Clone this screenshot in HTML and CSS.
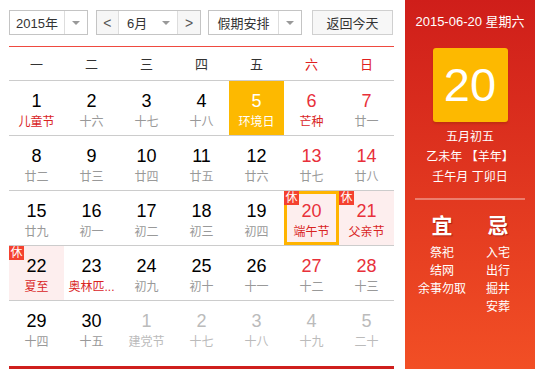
FILE: index.html
```html
<!DOCTYPE html>
<html lang="zh-CN">
<head>
  <meta charset="UTF-8">
  <title>万年历</title>
  <link rel="stylesheet" href="styles.css">
</head>
<body>

  <div class="calendar">
    <div class="cal-main">

      <div class="toolbar">
        <div class="select year-select">
          <span class="select-text">2015年</span>
          <span class="select-arrow"></span>
        </div>
        <div class="select month-select">
          <span class="nav-btn">&lt;</span>
          <span class="select-text">6月</span>
          <span class="select-arrow"></span>
          <span class="nav-btn">&gt;</span>
        </div>
        <div class="select holiday-select">
          <span class="select-text">假期安排</span>
          <span class="select-arrow"></span>
        </div>
        <button class="today-btn">返回今天</button>
      </div>

      <div class="week-head">
        <span>一</span><span>二</span><span>三</span><span>四</span><span>五</span>
        <span class="weekend">六</span><span class="weekend">日</span>
      </div>

      <div class="days">
        <div class="day"><b>1</b><i class="fest">儿童节</i></div>
        <div class="day"><b>2</b><i>十六</i></div>
        <div class="day"><b>3</b><i>十七</i></div>
        <div class="day"><b>4</b><i>十八</i></div>
        <div class="day today"><b>5</b><i>环境日</i></div>
        <div class="day weekend"><b>6</b><i class="fest">芒种</i></div>
        <div class="day weekend"><b>7</b><i>廿一</i></div>

        <div class="day"><b>8</b><i>廿二</i></div>
        <div class="day"><b>9</b><i>廿三</i></div>
        <div class="day"><b>10</b><i>廿四</i></div>
        <div class="day"><b>11</b><i>廿五</i></div>
        <div class="day"><b>12</b><i>廿六</i></div>
        <div class="day weekend"><b>13</b><i>廿七</i></div>
        <div class="day weekend"><b>14</b><i>廿八</i></div>

        <div class="day"><b>15</b><i>廿九</i></div>
        <div class="day"><b>16</b><i>初一</i></div>
        <div class="day"><b>17</b><i>初二</i></div>
        <div class="day"><b>18</b><i>初三</i></div>
        <div class="day"><b>19</b><i>初四</i></div>
        <div class="day weekend rest selected"><span class="rest-tag">休</span><b>20</b><i class="fest">端午节</i></div>
        <div class="day weekend rest"><span class="rest-tag">休</span><b>21</b><i class="fest">父亲节</i></div>

        <div class="day rest"><span class="rest-tag">休</span><b>22</b><i class="fest">夏至</i></div>
        <div class="day"><b>23</b><i class="fest">奥林匹...</i></div>
        <div class="day"><b>24</b><i>初九</i></div>
        <div class="day"><b>25</b><i>初十</i></div>
        <div class="day"><b>26</b><i>十一</i></div>
        <div class="day weekend"><b>27</b><i>十二</i></div>
        <div class="day weekend"><b>28</b><i>十三</i></div>

        <div class="day"><b>29</b><i>十四</i></div>
        <div class="day"><b>30</b><i>十五</i></div>
        <div class="day other"><b>1</b><i>建党节</i></div>
        <div class="day other"><b>2</b><i>十七</i></div>
        <div class="day other"><b>3</b><i>十八</i></div>
        <div class="day other"><b>4</b><i>十九</i></div>
        <div class="day other"><b>5</b><i>二十</i></div>
      </div>

    </div>

    <div class="cal-side">
      <div class="side-date">2015-06-20 星期六</div>
      <div class="side-day">20</div>
      <div class="side-lunar">
        <p>五月初五</p>
        <p>乙未年 【羊年】</p>
        <p>壬午月 丁卯日</p>
      </div>
      <div class="side-line"></div>
      <div class="almanac">
        <div class="almanac-col">
          <h3>宜</h3>
          <p>祭祀</p>
          <p>结网</p>
          <p>余事勿取</p>
        </div>
        <div class="almanac-col">
          <h3>忌</h3>
          <p>入宅</p>
          <p>出行</p>
          <p>掘井</p>
          <p>安葬</p>
        </div>
      </div>
    </div>
  </div>

</body>
</html>
```

FILE: styles.css
```css
* {
  margin: 0;
  padding: 0;
  box-sizing: border-box;
  font-family: 'Liberation Sans', 'Noto Sans CJK SC', sans-serif;
}

body {
  background-color: #fff;
  color: #333;
}

.calendar {
  display: flex;
  height: 369px;
  padding-left: 9px;
}

/* Left part: toolbar + month grid */
.cal-main {
  width: 385px;
  margin-right: 11px;
  padding-top: 10px;
  border-bottom: 3px solid #cf1f1c;
}

.toolbar {
  display: flex;
  height: 25px;
  margin-bottom: 11px;
}

.select {
  display: flex;
  align-items: stretch;
  height: 25px;
  border: 1px solid #c4c4c4;
  font-size: 13px;
  color: #333;
  background-color: #fff;
}

.select-text {
  display: flex;
  align-items: center;
  justify-content: center;
}

.select-arrow {
  display: flex;
  align-items: center;
  justify-content: center;
  width: 23px;
  border-left: 1px solid #ddd;
}

.select-arrow::after {
  content: '';
  border-left: 4px solid transparent;
  border-right: 4px solid transparent;
  border-top: 4px solid #999;
}

.year-select {
  width: 79px;
  margin-right: 8px;
}

.year-select .select-text {
  width: 54px;
}

.month-select {
  width: 105px;
  margin-right: 7px;
}

.month-select .select-text {
  width: 37px;
}

.month-select .select-arrow {
  border-left: none;
  border-right: 1px solid #ddd;
  width: 23px;
}

.nav-btn {
  display: flex;
  align-items: center;
  justify-content: center;
  width: 22px;
  background-color: #f6f6f6;
  color: #555;
  font-size: 14px;
}

.month-select .nav-btn:first-child {
  border-right: 1px solid #ddd;
}

.holiday-select {
  width: 94px;
  margin-right: 10px;
}

.holiday-select .select-text {
  width: 70px;
}

.today-btn {
  width: 81px;
  height: 25px;
  border: 1px solid #d0d0d0;
  background-color: #f7f7f7;
  color: #333;
  font-size: 13px;
}

.week-head {
  display: grid;
  grid-template-columns: repeat(7, 55px);
  height: 35px;
  border-top: 1px solid #ef4a40;
  border-bottom: 1px solid #ccc;
}

.week-head span {
  display: flex;
  align-items: center;
  justify-content: center;
  font-size: 13px;
  color: #333;
}

.week-head .weekend {
  color: #e02020;
}

.days {
  display: grid;
  grid-template-columns: repeat(7, 55px);
}

.day {
  position: relative;
  height: 55px;
  border-bottom: 1px solid #ccc;
  display: flex;
  flex-direction: column;
  align-items: center;
  padding-top: 9px;
}

.day:nth-child(n+29) {
  border-bottom: none;
}

.day b {
  font-weight: normal;
  font-size: 18px;
  line-height: 22px;
  color: #000;
}

.day i {
  font-style: normal;
  font-size: 12px;
  line-height: 20px;
  color: #999;
  white-space: nowrap;
}

.day i.fest {
  color: #d9251f;
}

.day.weekend b {
  color: #e8303a;
}

.day.today {
  background-color: #fdb900;
}

.day.today b,
.day.today i {
  color: #fff;
}

.day.rest {
  background-color: #fdeeee;
}

.day.selected {
  box-shadow: inset 0 0 0 3px #ffb400;
}

.rest-tag {
  position: absolute;
  top: 0;
  left: 0;
  width: 15px;
  height: 14px;
  background-color: #f4412f;
  color: #fff;
  font-size: 12px;
  line-height: 14px;
  text-align: center;
}

.day.other b,
.day.other i {
  color: #bbb;
}

/* Right part: selected day details */
.cal-side {
  width: 130px;
  background: linear-gradient(to bottom, #cf1e1a, #f24f25);
  color: #fff;
  text-align: center;
  padding-top: 14px;
}

.side-date {
  font-size: 13px;
  line-height: 16px;
}

.side-day {
  width: 75px;
  height: 74px;
  margin: 18px auto 0;
  background-color: #fdb900;
  border-radius: 3px;
  box-shadow: 0 2px 2px rgba(150, 40, 0, 0.35);
  font-size: 47px;
  line-height: 74px;
}

.side-lunar {
  margin-top: 5px;
  font-size: 12px;
  line-height: 20px;
}

.side-line {
  width: 110px;
  height: 2px;
  margin: 11px auto 0;
  background-color: rgba(255, 255, 255, 0.35);
}

.almanac {
  display: grid;
  grid-template-columns: 56px 56px;
  justify-content: center;
  margin-top: 14px;
}

.almanac h3 {
  font-size: 21px;
  line-height: 24px;
  font-weight: bold;
  text-shadow: 1px 1px 1px rgba(120, 0, 0, 0.5);
  margin-bottom: 6px;
}

.almanac p {
  font-size: 12px;
  line-height: 18px;
  white-space: nowrap;
}
```
